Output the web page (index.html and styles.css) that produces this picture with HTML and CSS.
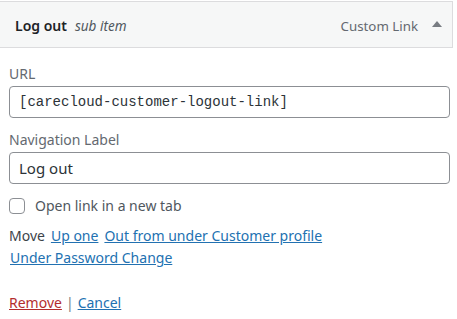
FILE: index.html
```html
<!DOCTYPE html>
<html>
<head>
<meta charset="utf-8">
<link rel="stylesheet" href="styles.css">
</head>
<body>
<div class="item">
  <div class="bar">
    <div class="title"><span class="name">Log out</span><span class="sub">sub item</span></div>
    <div class="controls"><span class="type">Custom Link</span><span class="arrow"></span></div>
  </div>
  <div class="settings">
    <label class="lbl">URL</label>
    <div class="input mono">[carecloud-customer-logout-link]</div>
    <label class="lbl">Navigation Label</label>
    <div class="input">Log out</div>
    <div class="check"><span class="box"></span><span>Open link in a new tab</span></div>
    <div class="move">
      <div class="row"><span class="mv">Move</span><a>Up one</a><a>Out from under Customer profile</a></div>
      <div class="row"><a class="first">Under Password Change</a></div>
    </div>
    <div class="actions"><a class="remove">Remove</a><span class="sep">|</span><a>Cancel</a></div>
  </div>
</div>
</body>
</html>
```

FILE: styles.css
```css
body {
  margin: 0;
  background: #fff;
  font-family: "Noto Sans", "Open Sans", sans-serif;
  font-size: 13px;
  color: #3c434a;
}
.item {
  width: 454px;
  margin: 1px 0 0 -1px;
}
.bar {
  display: flex;
  justify-content: space-between;
  align-items: center;
  height: 45px;
  background: #f6f7f7;
  border: 1px solid #dcdcde;
  padding: 0 0 0 15px;
  box-sizing: content-box;
}
.title {
  padding-top: 2px;
}
.name {
  font-size: 14px;
  font-weight: 600;
  color: #1d2327;
}
.sub {
  font-style: italic;
  color: #50575e;
  margin-left: 8px;
  font-size: 13.5px;
}
.controls {
  display: flex;
  align-items: center;
  padding-top: 2px;
}
.type {
  color: #646970;
  font-size: 13.3px;
}
.arrow {
  width: 0;
  height: 0;
  border-left: 5px solid transparent;
  border-right: 5px solid transparent;
  border-bottom: 6px solid #787c82;
  margin: 0 10px 4px 14px;
}
.settings {
  padding: 16px 3px 0 10px;
  display: flex;
  flex-direction: column;
}
.lbl {
  color: #646970;
  font-size: 14px;
  line-height: 20px;
  margin-bottom: 2px;
}
.input {
  height: 30px;
  border: 1px solid #8c8f94;
  border-radius: 4px;
  padding: 0 9px;
  display: flex;
  align-items: center;
  color: #2c3338;
  font-size: 15px;
  margin-bottom: 12px;
}
.mono {
  font-family: "Liberation Mono", monospace;
  font-size: 14px;
}
.check {
  display: flex;
  align-items: center;
  gap: 10px;
  color: #50575e;
  font-size: 14px;
}
.box {
  width: 14px;
  height: 14px;
  border: 1px solid #8c8f94;
  border-radius: 4px;
}
.move {
  margin-top: 10px;
  font-size: 14px;
  line-height: 22px;
  color: #3c434a;
}
a {
  color: #2271b1;
  text-decoration: underline;
  margin-left: 6px;
}
.move .first {
  margin-left: 1px;
}
.actions {
  margin-top: 24px;
  font-size: 14px;
}
.actions a { margin-left: 0; }
.actions .remove { color: #b32d2e; }
.sep { color: #787c82; margin: 0 4px; }
```
